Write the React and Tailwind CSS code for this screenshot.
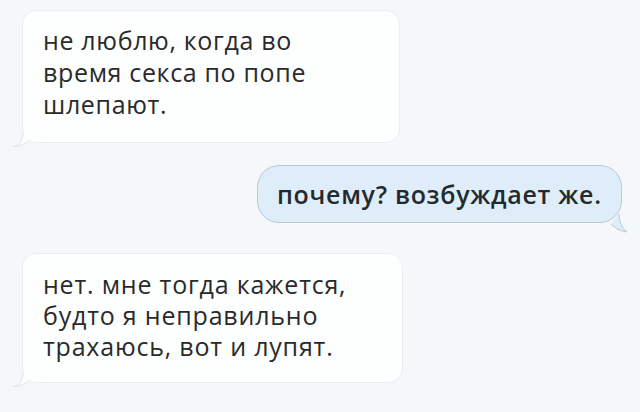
import React from "react";

function LeftTail() {
  return (
    <svg className="absolute left-[-10px] bottom-[-7px]" width="24" height="16" viewBox="0 0 24 16">
      <path d="M10 0 C10 8 6 12 0 14 C6 13 12 11 16 8" fill="#fdfefe" stroke="#dde5ea" strokeWidth="1" />
    </svg>
  );
}

function RightTail() {
  return (
    <svg className="absolute right-[-8px] bottom-[-12px]" width="22" height="20" viewBox="0 0 22 20">
      <path d="M12 0 C12 8 15 14 20 18 C13 17 8 14 4 10" fill="#deedf9" stroke="#b8c9d6" strokeWidth="1" />
    </svg>
  );
}

export default function App() {
  return (
    <div
      className="w-[640px] h-[412px] bg-[#f4f8fb] overflow-hidden flex flex-col text-[#2a2a2a]"
      style={{ fontFamily: '"Open Sans", "Noto Sans", sans-serif' }}
    >
      <div className="pl-[22px] pt-[10px]">
        <div className="relative w-[378px] h-[133px] bg-[#fdfefe] border border-[#e8eef2] rounded-[14px] pl-[20px] pt-[13px] text-[25px] leading-[32px] tracking-[0.65px] font-medium">
          не люблю, когда во
          <br />
          время секса по попе
          <br />
          шлепают.
          <LeftTail />
        </div>
      </div>
      <div className="flex justify-end pr-[18px] pt-[22px]">
        <div className="relative w-[365px] h-[58px] bg-[#deedf9] border border-[#b8c9d6] rounded-[22px] flex items-center pl-[19px] text-[25px] leading-[32px] tracking-[0.7px] font-semibold text-[#24292d]">
          почему? возбуждает же.
          <RightTail />
        </div>
      </div>
      <div className="pl-[22px] pt-[30px]">
        <div className="relative w-[381px] h-[130px] bg-[#fdfefe] border border-[#e8eef2] rounded-[14px] pl-[20px] pt-[15px] text-[25px] leading-[31px] tracking-[0.8px] font-medium">
          нет. мне тогда кажется,
          <br />
          будто я неправильно
          <br />
          трахаюсь, вот и лупят.
          <LeftTail />
        </div>
      </div>
    </div>
  );
}
